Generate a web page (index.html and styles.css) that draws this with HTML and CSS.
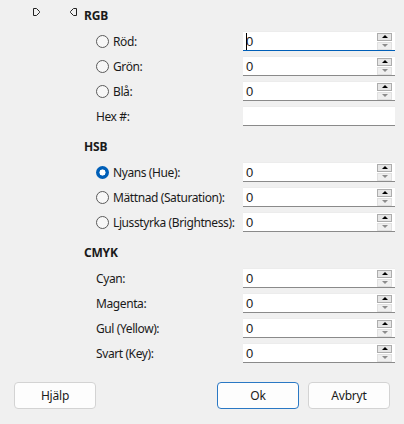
FILE: index.html
```html
<!DOCTYPE html>
<html lang="sv">
<head>
    <meta charset="UTF-8">
    <meta name="viewport" content="width=device-width, initial-scale=1.0">
    <title>Färgväljare</title>
    <link rel="stylesheet" href="styles.css">
</head>
<body>
    <div class="dialog">

        <!-- RGB -->
        <div class="section">
            <div class="head">
                <span class="marker marker-a">
                    <svg width="8" height="9" viewBox="0 0 8 9"><path d="M0.5 0.5H3.5L6.5 3.5V4.5L3.5 7.5H0.5Z" fill="none" stroke="#222" stroke-width="1"/></svg>
                </span>
                <span class="marker marker-b">
                    <svg width="8" height="9" viewBox="0 0 8 9"><path d="M6.5 0.5H3.5L0.5 3.5V4.5L3.5 7.5H6.5Z" fill="none" stroke="#222" stroke-width="1"/></svg>
                </span>
                <h2>RGB</h2>
            </div>
            <div class="rows">
                <label class="row"><span class="radio"></span>Röd:</label>
                <div class="field focused"><span class="val"><i class="caret"></i>0</span><span class="spin"><b class="up"></b><b class="down"></b></span></div>
                <label class="row"><span class="radio"></span>Grön:</label>
                <div class="field"><span class="val">0</span><span class="spin"><b class="up"></b><b class="down"></b></span></div>
                <label class="row"><span class="radio"></span>Blå:</label>
                <div class="field"><span class="val">0</span><span class="spin"><b class="up"></b><b class="down"></b></span></div>
                <label class="row">Hex #:</label>
                <div class="field"><span class="val"></span></div>
            </div>
        </div>

        <!-- HSB -->
        <div class="section">
            <div class="head"><h2>HSB</h2></div>
            <div class="rows">
                <label class="row"><span class="radio checked"></span>Nyans (Hue):</label>
                <div class="field"><span class="val">0</span><span class="spin"><b class="up"></b><b class="down"></b></span></div>
                <label class="row"><span class="radio"></span>Mättnad (Saturation):</label>
                <div class="field"><span class="val">0</span><span class="spin"><b class="up"></b><b class="down"></b></span></div>
                <label class="row"><span class="radio"></span>Ljusstyrka (Brightness):</label>
                <div class="field"><span class="val">0</span><span class="spin"><b class="up"></b><b class="down"></b></span></div>
            </div>
        </div>

        <!-- CMYK -->
        <div class="section">
            <div class="head"><h2>CMYK</h2></div>
            <div class="rows">
                <label class="row">Cyan:</label>
                <div class="field"><span class="val">0</span><span class="spin"><b class="up"></b><b class="down"></b></span></div>
                <label class="row">Magenta:</label>
                <div class="field"><span class="val">0</span><span class="spin"><b class="up"></b><b class="down"></b></span></div>
                <label class="row">Gul (Yellow):</label>
                <div class="field"><span class="val">0</span><span class="spin"><b class="up"></b><b class="down"></b></span></div>
                <label class="row">Svart (Key):</label>
                <div class="field"><span class="val">0</span><span class="spin"><b class="up"></b><b class="down"></b></span></div>
            </div>
        </div>

        <div class="buttons">
            <button>Hjälp</button>
            <span class="spacer"></span>
            <button class="default">Ok</button>
            <button>Avbryt</button>
        </div>
    </div>
</body>
</html>
```

FILE: styles.css
```css
body {
    margin: 0;
    background: #f0f0f0;
    font-family: "Noto Sans", "Open Sans", sans-serif;
    font-size: 12px;
    letter-spacing: -0.4px;
    color: #1a1a1a;
}
.dialog {
    width: 404px;
    height: 424px;
    padding-top: 6px;
    box-sizing: border-box;
}
.section {
    margin-bottom: 11px;
}
.head {
    display: flex;
    align-items: center;
    height: 20px;
    padding-left: 84px;
    position: relative;
}
.marker {
    position: absolute;
    top: 2px;
    height: 9px;
}
.marker-a { left: 33px; }
.marker-b { left: 70px; }
.marker svg { display: block; }
h2 {
    margin: 0;
    font-size: 12px;
    font-weight: 700;
    line-height: 20px;
    letter-spacing: -0.2px;
}
.rows {
    display: grid;
    grid-template-columns: 147px 152px;
    row-gap: 5px;
    margin-top: 5px;
    padding-left: 96px;
}
.row {
    display: flex;
    align-items: center;
    height: 20px;
    white-space: nowrap;
}
.radio {
    width: 11px;
    height: 11px;
    border: 1px solid #5a5a5a;
    border-radius: 50%;
    margin-right: 4px;
    background: #f7f7f7;
    flex: none;
}
.radio.checked {
    width: 13px;
    height: 13px;
    border: none;
    background: radial-gradient(circle, #fff 0 2.8px, #005fb8 3.3px);
}
.field {
    display: flex;
    align-items: center;
    height: 20px;
    box-sizing: border-box;
    background: #fff;
    border-top: 1px solid #ececec;
    border-bottom: 1px solid #8a8a8a;
}
.field.focused {
    border-bottom-color: #005fb8;
}
.val {
    flex: 1;
    padding-left: 3px;
    font-family: "Liberation Sans", sans-serif;
    font-size: 13px;
    letter-spacing: 0;
    position: relative;
}
.caret {
    position: absolute;
    left: 3px;
    top: -1px;
    width: 1px;
    height: 17px;
    background: #000;
}
.spin {
    display: flex;
    flex-direction: column;
    margin-right: 3px;
    gap: 1px;
}
.spin b {
    display: flex;
    align-items: center;
    justify-content: center;
    width: 15px;
    height: 8px;
    box-sizing: border-box;
}
.spin .up {
    background: #e6e6e6;
    border: 1px solid #adadad;
}
.spin .up::after {
    content: "";
    border-left: 3px solid transparent;
    border-right: 3px solid transparent;
    border-bottom: 3px solid #000;
}
.spin .down {
    background: #efefef;
    border: 1px solid #e0e0e0;
}
.spin .down::after {
    content: "";
    border-left: 3px solid transparent;
    border-right: 3px solid transparent;
    border-top: 3px solid #8c8c8c;
}
.buttons {
    display: flex;
    gap: 9px;
    padding: 8px 14px 0;
}
.spacer {
    flex: 1;
}
button {
    width: 82px;
    height: 27px;
    background: #fdfdfd;
    border: 1px solid #d3d3d3;
    border-radius: 4px;
    font-family: inherit;
    font-size: 12px;
    letter-spacing: -0.2px;
    color: #1a1a1a;
    padding: 0;
}
button.default {
    border-color: #2a78c4;
}
```
